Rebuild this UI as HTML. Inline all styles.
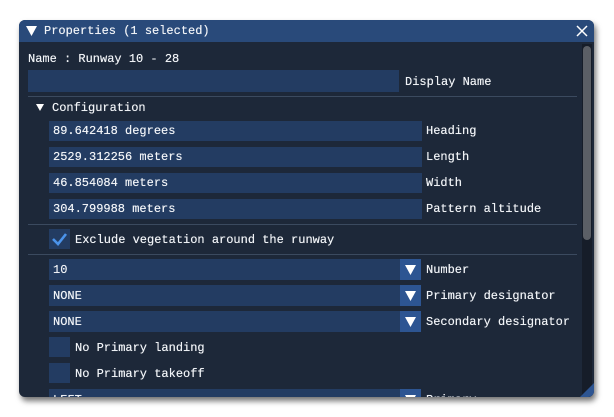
<!DOCTYPE html>
<html><head><style>
*{margin:0;padding:0;box-sizing:border-box}
body{width:614px;height:417px;background:#fff;position:relative;overflow:hidden;font-family:"Liberation Mono",monospace;font-size:12px;color:#f0f3f7}
.win{position:absolute;left:19px;top:20px;width:575px;height:377px;background:#1d2839;border-radius:6px;overflow:hidden;box-shadow:2px 4px 6px rgba(0,0,0,.55)}
.title{position:absolute;left:0;top:0;width:100%;height:22px;background:#294a7a}
.a{position:absolute;white-space:nowrap;line-height:14px;text-shadow:0 0 .4px #fff}
.in{position:absolute;background:#233c62}
.sep{position:absolute;height:1px;background:#3b4a5f}
.btn{position:absolute;width:21px;background:#2d5592}
.cb{position:absolute;width:21px;height:20px;background:#233c62}
</style></head><body>
<div class="win">
<div class="title"></div>
<svg style="position:absolute;left:7px;top:6px" width="11" height="10"><path d="M0 0H11L5.5 10Z" fill="#fff"/></svg>
<div class="a" style="left:25px;top:4px">Properties (1 selected)</div>
<svg style="position:absolute;left:557px;top:5px" width="12" height="12"><path d="M1 1L11 11M11 1L1 11" stroke="#fff" stroke-width="1.5"/></svg>
<div class="a" style="left:9px;top:32px">Name : Runway 10 - 28</div>
<div class="in" style="left:9px;top:50px;width:371px;height:22px"></div>
<div class="a" style="left:386px;top:55px">Display Name</div>
<div class="sep" style="left:9px;top:76px;width:549px"></div>
<svg style="position:absolute;left:17px;top:84px" width="8" height="7"><path d="M0 0H8L4 7Z" fill="#fff"/></svg>
<div class="a" style="left:33px;top:81px">Configuration</div>
<div class="in" style="left:30px;top:101px;width:373px;height:20px"></div><div class="a" style="left:34px;top:104px">89.642418 degrees</div><div class="a" style="left:407px;top:104px">Heading</div>
<div class="in" style="left:30px;top:127px;width:373px;height:20px"></div><div class="a" style="left:34px;top:130px">2529.312256 meters</div><div class="a" style="left:407px;top:130px">Length</div>
<div class="in" style="left:30px;top:153px;width:373px;height:20px"></div><div class="a" style="left:34px;top:156px">46.854084 meters</div><div class="a" style="left:407px;top:156px">Width</div>
<div class="in" style="left:30px;top:179px;width:373px;height:20px"></div><div class="a" style="left:34px;top:182px">304.799988 meters</div><div class="a" style="left:407px;top:182px">Pattern altitude</div>
<div class="sep" style="left:9px;top:204px;width:549px"></div>
<div class="cb" style="left:30px;top:209px"></div>
<svg style="position:absolute;left:32px;top:211px" width="17" height="16"><path d="M2 8L7 13L15 3" fill="none" stroke="#4b93ea" stroke-width="2.6"/></svg>
<div class="a" style="left:56px;top:213px">Exclude vegetation around the runway</div>
<div class="sep" style="left:9px;top:234px;width:549px"></div>
<div class="in" style="left:30px;top:239px;width:352px;height:21px"></div><div class="btn" style="left:381px;top:239px;height:21px"></div>
<svg style="position:absolute;left:386px;top:245px" width="11" height="10"><path d="M0 0H11L5.5 10Z" fill="#fff"/></svg>
<div class="a" style="left:34px;top:243px">10</div><div class="a" style="left:407px;top:243px">Number</div>
<div class="in" style="left:30px;top:265px;width:352px;height:21px"></div><div class="btn" style="left:381px;top:265px;height:21px"></div>
<svg style="position:absolute;left:386px;top:271px" width="11" height="10"><path d="M0 0H11L5.5 10Z" fill="#fff"/></svg>
<div class="a" style="left:34px;top:269px">NONE</div><div class="a" style="left:407px;top:269px">Primary designator</div>
<div class="in" style="left:30px;top:291px;width:352px;height:21px"></div><div class="btn" style="left:381px;top:291px;height:21px"></div>
<svg style="position:absolute;left:386px;top:297px" width="11" height="10"><path d="M0 0H11L5.5 10Z" fill="#fff"/></svg>
<div class="a" style="left:34px;top:295px">NONE</div><div class="a" style="left:407px;top:295px">Secondary designator</div>
<div class="cb" style="left:30px;top:317px"></div><div class="a" style="left:56px;top:321px">No Primary landing</div>
<div class="cb" style="left:30px;top:343px"></div><div class="a" style="left:56px;top:347px">No Primary takeoff</div>
<div class="in" style="left:30px;top:369px;width:352px;height:21px"></div><div class="btn" style="left:381px;top:369px;height:21px"></div>
<svg style="position:absolute;left:386px;top:375px" width="11" height="10"><path d="M0 0H11L5.5 10Z" fill="#fff"/></svg>
<div class="a" style="left:34px;top:373px">LEFT</div><div class="a" style="left:407px;top:373px">Primary</div>
<div style="position:absolute;left:563px;top:24px;width:10px;height:353px;background:#161d29"></div>
<div style="position:absolute;left:564px;top:26px;width:8px;height:194px;background:#5b5f66;border-radius:4px"></div>
<svg style="position:absolute;left:560px;top:363px" width="15" height="14"><path d="M15 0V14H1Z" fill="#2d5592"/></svg>
</div>
</body></html>
